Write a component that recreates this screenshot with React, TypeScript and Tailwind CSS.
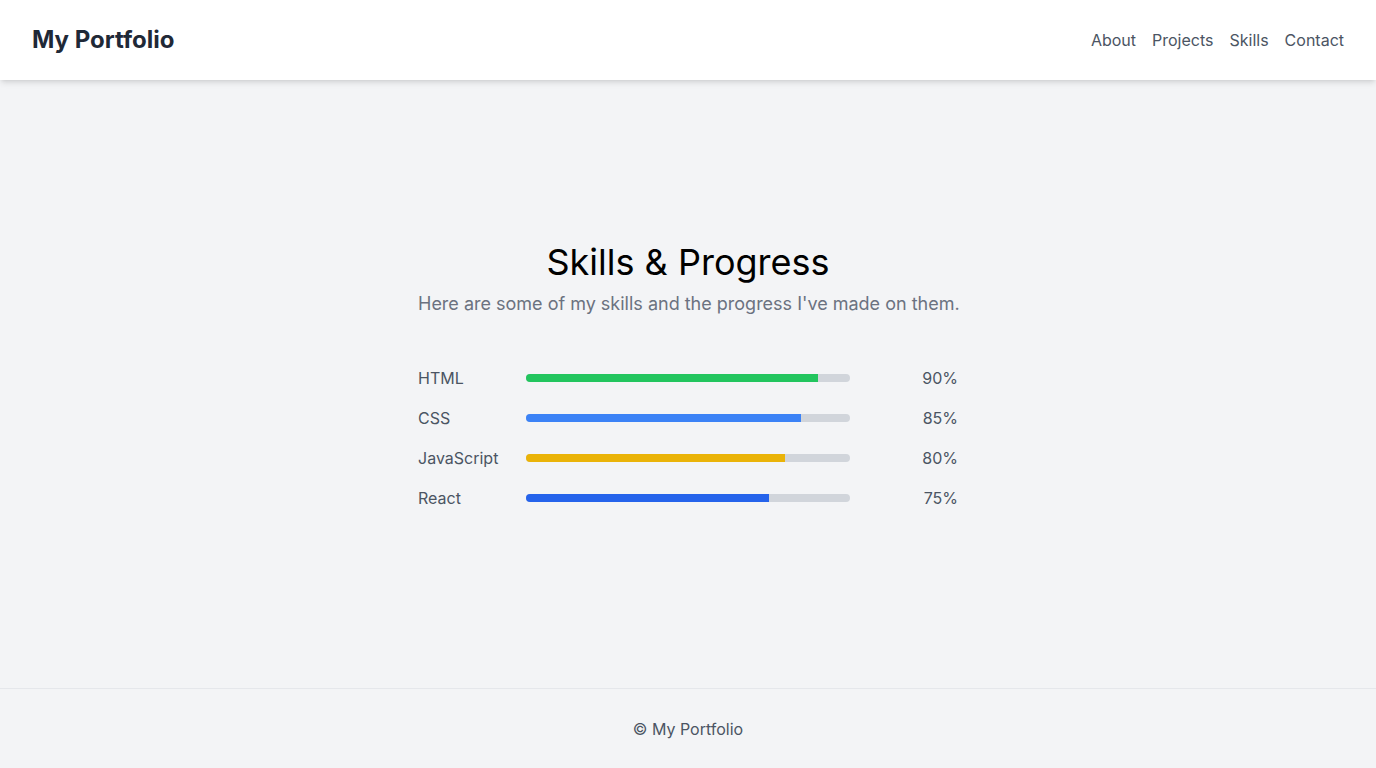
const skills = [
  { name: 'HTML', value: 90, color: 'bg-[#22c55e]' },
  { name: 'CSS', value: 85, color: 'bg-[#3b82f6]' },
  { name: 'JavaScript', value: 80, color: 'bg-[#eab308]' },
  { name: 'React', value: 75, color: 'bg-[#2563eb]' },
];

export default function App() {
  return (
    <div className="min-h-screen flex flex-col bg-[#f3f4f6] font-['Inter',sans-serif]">
      <header className="h-20 bg-white shadow-md flex items-center justify-between px-8 relative z-10">
        <h1 className="text-2xl font-bold text-[#1f2937]">My Portfolio</h1>
        <nav className="flex gap-4 text-base text-[#4b5563]">
          <a href="#about">About</a>
          <a href="#projects">Projects</a>
          <a href="#skills">Skills</a>
          <a href="#contact">Contact</a>
        </nav>
      </header>

      <main className="h-[608px] flex items-center justify-center pb-4">
        <section className="w-[540px]">
          <h2 className="text-4xl text-black text-center mb-2">Skills &amp; Progress</h2>
          <p className="text-lg text-[#6b7280] text-center whitespace-nowrap mb-12">
            Here are some of my skills and the progress I've made on them.
          </p>
          <div className="flex flex-col gap-4">
            {skills.map((s) => (
              <div key={s.name} className="flex items-center">
                <span className="w-[108px] text-base text-[#4b5563]">{s.name}</span>
                <div className="w-[324px] h-2 rounded-full bg-[#d1d5db] overflow-hidden">
                  <div className={`h-full ${s.color}`} style={{ width: `${s.value}%` }} />
                </div>
                <span className="flex-1 text-right text-base text-[#4b5563]">{s.value}%</span>
              </div>
            ))}
          </div>
        </section>
      </main>

      <footer className="h-20 border-t border-[#e5e7eb] flex items-center justify-center text-base text-[#4b5563]">
        © My Portfolio
      </footer>
    </div>
  );
}
